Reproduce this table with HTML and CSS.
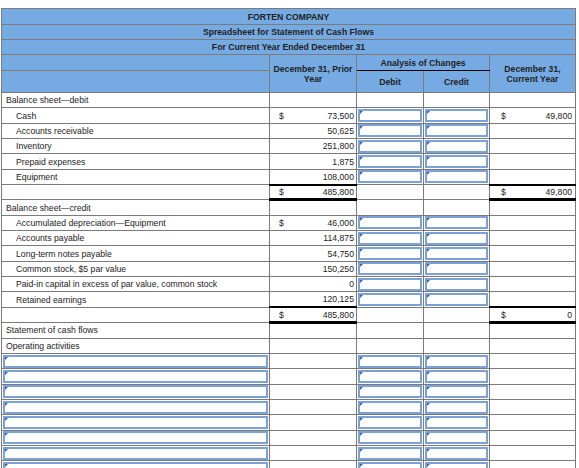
FILE: index.html
```html
<!DOCTYPE html>
<html lang="en">
<head>
<meta charset="utf-8">
<title>Forten Company - Spreadsheet for Statement of Cash Flows</title>
<link rel="stylesheet" href="styles.css">
</head>
<body>
<div class="page">
<table class="sheet">
  <colgroup>
    <col class="c-label"><col class="c-prior"><col class="c-debit"><col class="c-credit"><col class="c-current">
  </colgroup>
  <thead>
    <tr class="t1"><th colspan="5">FORTEN COMPANY</th></tr>
    <tr class="t2"><th colspan="5">Spreadsheet for Statement of Cash Flows</th></tr>
    <tr class="t2"><th colspan="5">For Current Year Ended December 31</th></tr>
    <tr class="h1">
      <th></th>
      <th rowspan="2">December 31, Prior<br>Year</th>
      <th colspan="2" class="analysis">Analysis of Changes</th>
      <th rowspan="2">December 31,<br>Current Year</th>
    </tr>
    <tr class="h2"><th></th><th>Debit</th><th>Credit</th></tr>
  </thead>
  <tbody>
    <tr><td class="grp">Balance sheet—debit</td><td></td><td></td><td></td><td></td></tr>
    <tr><td class="item">Cash</td><td class="amt p"><div class="m"><span>$</span><span>73,500</span></div></td><td><div class="box"></div></td><td><div class="box"></div></td><td class="amt c"><div class="m"><span>$</span><span>49,800</span></div></td></tr>
    <tr><td class="item">Accounts receivable</td><td class="amt p"><div class="m"><span></span><span>50,625</span></div></td><td><div class="box"></div></td><td><div class="box"></div></td><td></td></tr>
    <tr><td class="item">Inventory</td><td class="amt p"><div class="m"><span></span><span>251,800</span></div></td><td><div class="box"></div></td><td><div class="box"></div></td><td></td></tr>
    <tr><td class="item">Prepaid expenses</td><td class="amt p"><div class="m"><span></span><span>1,875</span></div></td><td><div class="box"></div></td><td><div class="box"></div></td><td></td></tr>
    <tr><td class="item">Equipment</td><td class="amt p"><div class="m"><span></span><span>108,000</span></div></td><td><div class="box"></div></td><td><div class="box"></div></td><td></td></tr>
    <tr class="total"><td></td><td class="amt p tot"><div class="m"><span>$</span><span>485,800</span></div></td><td></td><td></td><td class="amt c tot"><div class="m"><span>$</span><span>49,800</span></div></td></tr>
    <tr><td class="grp">Balance sheet—credit</td><td></td><td></td><td></td><td></td></tr>
    <tr><td class="item">Accumulated depreciation—Equipment</td><td class="amt p"><div class="m"><span>$</span><span>46,000</span></div></td><td><div class="box"></div></td><td><div class="box"></div></td><td></td></tr>
    <tr><td class="item">Accounts payable</td><td class="amt p"><div class="m"><span></span><span>114,875</span></div></td><td><div class="box"></div></td><td><div class="box"></div></td><td></td></tr>
    <tr><td class="item">Long-term notes payable</td><td class="amt p"><div class="m"><span></span><span>54,750</span></div></td><td><div class="box"></div></td><td><div class="box"></div></td><td></td></tr>
    <tr><td class="item">Common stock, $5 par value</td><td class="amt p"><div class="m"><span></span><span>150,250</span></div></td><td><div class="box"></div></td><td><div class="box"></div></td><td></td></tr>
    <tr><td class="item">Paid-in capital in excess of par value, common stock</td><td class="amt p"><div class="m"><span></span><span>0</span></div></td><td><div class="box"></div></td><td><div class="box"></div></td><td></td></tr>
    <tr><td class="item">Retained earnings</td><td class="amt p"><div class="m"><span></span><span>120,125</span></div></td><td><div class="box"></div></td><td><div class="box"></div></td><td></td></tr>
    <tr class="total"><td></td><td class="amt p tot"><div class="m"><span>$</span><span>485,800</span></div></td><td></td><td></td><td class="amt c tot"><div class="m"><span>$</span><span>0</span></div></td></tr>
    <tr><td class="grp">Statement of cash flows</td><td></td><td></td><td></td><td></td></tr>
    <tr><td class="grp">Operating activities</td><td></td><td></td><td></td><td></td></tr>
    <tr><td><div class="box"></div></td><td></td><td><div class="box"></div></td><td><div class="box"></div></td><td></td></tr>
    <tr><td><div class="box"></div></td><td></td><td><div class="box"></div></td><td><div class="box"></div></td><td></td></tr>
    <tr><td><div class="box"></div></td><td></td><td><div class="box"></div></td><td><div class="box"></div></td><td></td></tr>
    <tr><td><div class="box"></div></td><td></td><td><div class="box"></div></td><td><div class="box"></div></td><td></td></tr>
    <tr><td><div class="box"></div></td><td></td><td><div class="box"></div></td><td><div class="box"></div></td><td></td></tr>
    <tr><td><div class="box"></div></td><td></td><td><div class="box"></div></td><td><div class="box"></div></td><td></td></tr>
    <tr><td><div class="box"></div></td><td></td><td><div class="box"></div></td><td><div class="box"></div></td><td></td></tr>
    <tr><td><div class="box"></div></td><td></td><td><div class="box"></div></td><td><div class="box"></div></td><td></td></tr>
    <tr><td><div class="box"></div></td><td></td><td><div class="box"></div></td><td><div class="box"></div></td><td></td></tr>
  </tbody>
</table>
</div>
</body>
</html>
```
FILE: styles.css
```css
html, body {
  margin: 0;
  padding: 0;
  overflow: hidden;
  background: #ffffff;
}

.page {
  padding: 8px 0 0 1px;
}

.sheet {
  border-collapse: collapse;
  table-layout: fixed;
  width: 575px;
  font-family: "Liberation Sans", Arial, sans-serif;
  font-size: 8.67px;
  line-height: 10px;
  color: #222222;
}

.c-label { width: 268px; }
.c-prior { width: 87px; }
.c-debit { width: 67px; }
.c-credit { width: 66px; }
.c-current { width: 86px; }

.sheet th,
.sheet td {
  border: 1px solid #7b7b7b;
  padding: 0;
  vertical-align: middle;
}

.sheet thead th {
  background: #75aae2;
  font-weight: bold;
  text-align: center;
  color: #222222;
}

.t1 { height: 16px; }
.t2 { height: 15px; }
.h1 { height: 16px; }
.h2 { height: 22px; }

.sheet thead th.analysis {
  border-bottom: 1px solid #000000;
}

.sheet tbody tr { height: 15.35px; }

.grp { padding-left: 4px !important; white-space: nowrap; }
.item { padding-left: 14px !important; white-space: nowrap; }

.m {
  display: flex;
  justify-content: space-between;
}

.amt.p .m { padding: 0 2px 0 9px; }
.amt.c .m { padding: 0 3px 0 11px; }

.sheet td.tot {
  border-top: 2px solid #000000;
  border-bottom: 3px solid #000000;
}

.box {
  position: relative;
  height: 9px;
  margin: 0 1px;
  border: 2px solid #7ba1d6;
}

.box::before {
  content: "";
  position: absolute;
  top: 0;
  left: 0;
  border-top: 3px solid #2f62b8;
  border-right: 3px solid transparent;
}
```
